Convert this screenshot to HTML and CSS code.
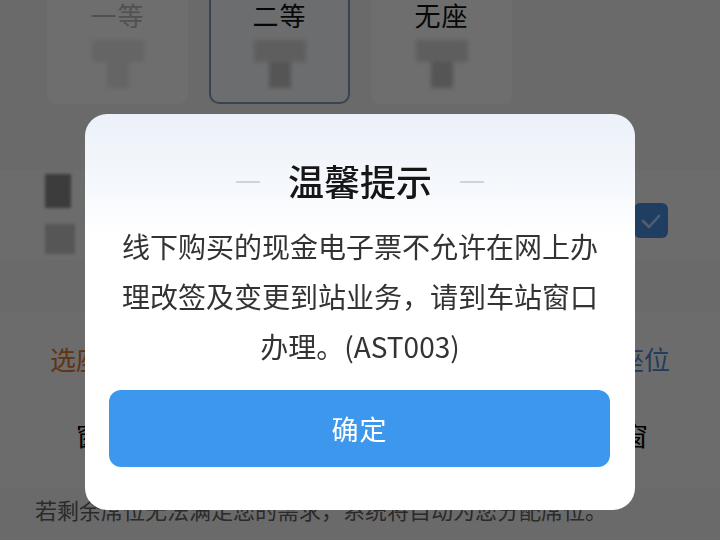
FILE: index.html
```html
<!DOCTYPE html>
<html lang="zh-CN">
<head>
<meta charset="utf-8">
<title>温馨提示</title>
<link rel="stylesheet" href="styles.css">
</head>
<body>
<div class="page">
  <div class="seat-tabs">
    <div class="tab tab-disabled">
      <div class="tab-name">一等</div>
      <div class="price"><span class="price-top"></span><span class="price-stem"></span></div>
    </div>
    <div class="tab tab-active">
      <div class="tab-name">二等</div>
      <div class="price"><span class="price-top"></span><span class="price-stem"></span></div>
    </div>
    <div class="tab">
      <div class="tab-name">无座</div>
      <div class="price"><span class="price-top"></span><span class="price-stem"></span></div>
    </div>
  </div>

  <div class="passenger">
    <div class="avatar">
      <span class="avatar-a"></span>
      <span class="avatar-b"></span>
    </div>
    <div class="checkbox">
      <svg viewBox="0 0 34 34" width="34" height="34"><polyline points="9,17 15,23 25,12" fill="none" stroke="#b9d6f7" stroke-width="2.6" stroke-linecap="round" stroke-linejoin="round"/></svg>
    </div>
  </div>

  <div class="choose">
    <span class="choose-left">选座服务</span>
    <span class="choose-right">已选座位</span>
  </div>

  <div class="seatmap">
    <span class="win">窗</span>
    <span class="win">窗</span>
  </div>

  <p class="note">若剩余席位无法满足您的需求，系统将自动为您分配席位。</p>
</div>

<div class="mask"></div>

<div class="dialog-layer">
  <div class="dialog">
    <div class="dialog-head">
      <span class="dash"></span>
      <h2 class="dialog-title">温馨提示</h2>
      <span class="dash"></span>
    </div>
    <p class="dialog-body">线下购买的现金电子票不允许在网上办<br>理改签及变更到站业务，请到车站窗口<br>办理。(AST003)</p>
    <div class="dialog-actions">
      <button class="btn-ok" type="button">确定</button>
    </div>
  </div>
</div>
</body>
</html>
```

FILE: styles.css
```css
* {
  box-sizing: border-box;
}

html, body {
  margin: 0;
  padding: 0;
  width: 720px;
  height: 540px;
  overflow: hidden;
}

body {
  font-family: "Noto Sans CJK SC", "Noto Sans", sans-serif;
  background: #f1f1f1;
  color: #111;
}

.page {
  width: 720px;
  height: 540px;
  display: flex;
  flex-direction: column;
}

/* seat class tabs (top edge scrolled off screen) */
.seat-tabs {
  display: flex;
  gap: 21px;
  padding-left: 47px;
}

.tab {
  width: 141px;
  height: 104px;
  display: flex;
  flex-direction: column;
  align-items: center;
  padding-top: 1px;
  background: #fafafa;
  border-radius: 0 0 10px 10px;
}

.tab-active {
  border: 2px solid #7f98bd;
  border-top: 0;
  background: #f6f8fc;
}

.tab-name {
  font-size: 26px;
  line-height: 28px;
  letter-spacing: 1px;
}

.tab-disabled .tab-name {
  color: #b8b8b8;
}

.price {
  margin-top: 11px;
  display: flex;
  flex-direction: column;
  align-items: center;
  filter: blur(2px);
}

.price-top {
  width: 52px;
  height: 22px;
  background: #d6d6d6;
}

.price-stem {
  width: 22px;
  height: 26px;
  background: #c2c2c2;
}

.tab-disabled .price-top,
.tab-disabled .price-stem {
  background: #e6e6e6;
}

/* passenger row */
.passenger {
  margin-top: 66px;
  height: 90px;
  display: flex;
  justify-content: space-between;
  align-items: flex-start;
  padding: 0 52px 0 45px;
  background: #f5f5f5;
}

.avatar {
  display: flex;
  flex-direction: column;
  gap: 16px;
  padding-top: 4px;
  filter: blur(1.5px);
}

.avatar-a {
  width: 26px;
  height: 34px;
  background: #8a8a8a;
}

.avatar-b {
  width: 30px;
  height: 30px;
  background: #c4c4c4;
}

.checkbox {
  margin-top: 33px;
  width: 34px;
  height: 35px;
  border-radius: 6px;
  background: #4a8ee0;
  display: flex;
  align-items: center;
  justify-content: center;
}

.checkbox svg {
  display: block;
}

/* choose seat row */
.choose {
  margin-top: 51px;
  display: flex;
  justify-content: space-between;
  padding: 34px 50px 0 50px;
  height: 68px;
  font-size: 26px;
  line-height: 28px;
  background: #f5f5f5;
}

.choose-left {
  color: #d9782f;
}

.choose-right {
  color: #4d89d6;
}

/* seat map */
.seatmap {
  display: flex;
  justify-content: space-between;
  padding: 42px 72px 0 76px;
  height: 110px;
  font-size: 26px;
  line-height: 28px;
  background: #f5f5f5;
}

.win {
  color: #000;
}

.note {
  margin: 6px 0 0 0;
  padding-left: 35px;
  font-size: 22px;
  line-height: 28px;
  color: #606060;
  white-space: nowrap;
}

/* mask */
.mask {
  position: fixed;
  inset: 0;
  background: rgba(0, 0, 0, 0.56);
}

/* dialog */
.dialog-layer {
  position: fixed;
  inset: 0;
  display: flex;
  justify-content: center;
  align-items: flex-start;
  padding-top: 114px;
}

.dialog {
  width: 550px;
  border-radius: 22px;
  overflow: hidden;
  background: linear-gradient(180deg, #ecf1f9 0px, #f5f8fc 70px, #ffffff 120px);
}

.dialog-head {
  height: 86px;
  padding-top: 46px;
  display: flex;
  justify-content: center;
  align-items: flex-start;
  gap: 28px;
}

.dash {
  width: 24px;
  height: 2px;
  margin-top: 21px;
  background: #cfd3da;
}

.dialog-title {
  margin: 0;
  font-size: 36px;
  line-height: 40px;
  font-weight: 500;
  color: #161616;
  letter-spacing: 0;
}

.dialog-body {
  margin: 21px 0 0 0;
  padding: 0 35px;
  font-size: 28px;
  line-height: 50px;
  color: #333;
  text-align: center;
  white-space: nowrap;
}

.dialog-actions {
  margin-top: 19px;
  padding: 0 25px 43px 24px;
}

.btn-ok {
  display: flex;
  align-items: center;
  justify-content: center;
  width: 100%;
  height: 77px;
  border: none;
  border-radius: 12px;
  background: #3d97ec;
  color: #fff;
  font-family: "Noto Sans CJK SC", "Noto Sans", sans-serif;
  font-size: 27px;
  letter-spacing: 1px;
  padding: 0;
}
```
